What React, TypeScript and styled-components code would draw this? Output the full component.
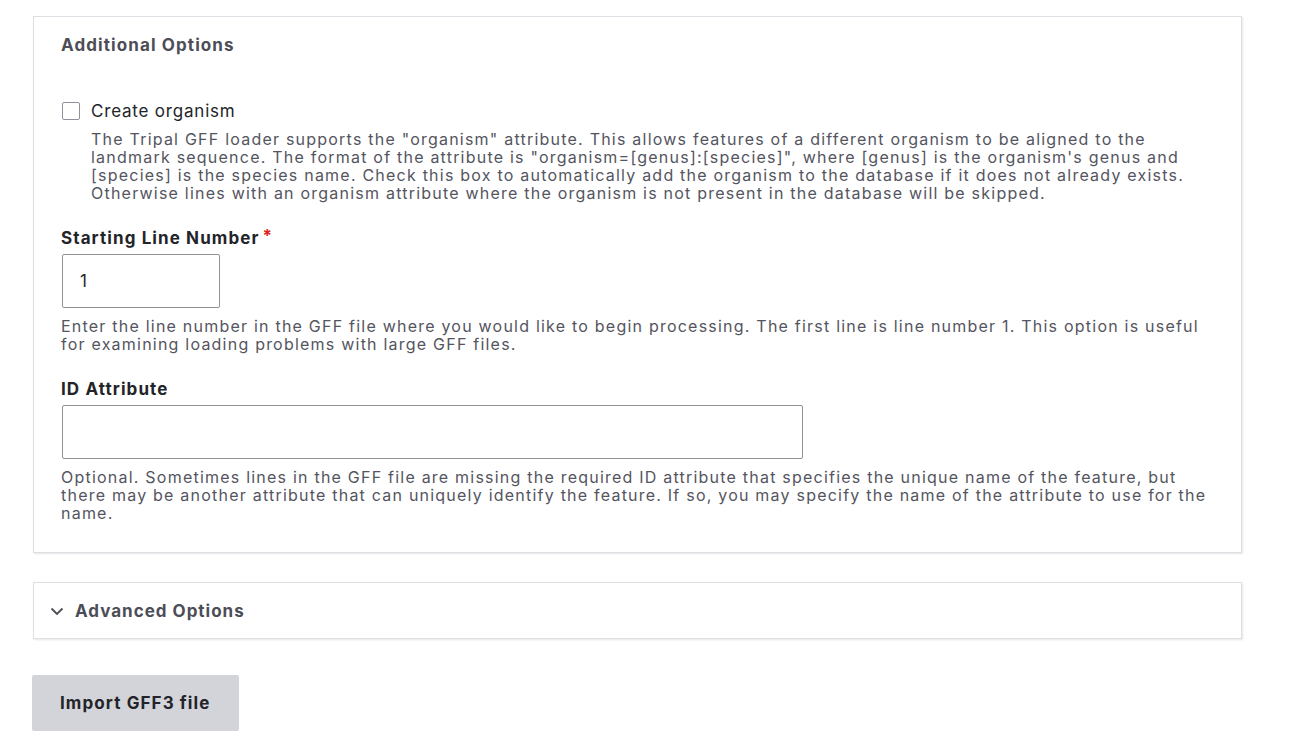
import React from "react";
import styled, { createGlobalStyle } from "styled-components";

const Global = createGlobalStyle`
  html, body { margin: 0; padding: 0; background: #ffffff; }
  body { font-family: Inter, "Noto Sans", sans-serif; color: #232429; }
`;

const Page = styled.div`
  width: 1209px;
  padding: 16px 0 0 33px;
  display: flex;
  flex-direction: column;
`;

const Card = styled.fieldset`
  margin: 0;
  border: 1px solid #dedfe4;
  box-shadow: 1px 1px 2px rgba(0, 0, 0, 0.1);
  padding: 18px 22px 30px 27px;
  display: flex;
  flex-direction: column;
  min-width: 0;
`;

const Legend = styled.div`
  font-size: 17px;
  font-weight: 700;
  color: #4c4d57;
  line-height: 20px;
  margin-bottom: 46px;
  letter-spacing: 1.1px;
`;

const CheckRow = styled.label`
  display: flex;
  align-items: center;
  gap: 11px;
  font-size: 17px;
  line-height: 20px;
  color: #232429;
  margin-left: 1px;
  letter-spacing: 0.8px;
`;

const Box = styled.span`
  width: 18px;
  height: 18px;
  box-sizing: border-box;
  border: 1px solid #8e929c;
  border-radius: 2px;
  background: #fff;
`;

const Description = styled.div<{ $indent?: boolean }>`
  font-size: 16px;
  line-height: 18px;
  color: #545560;
  margin-left: ${(p) => (p.$indent ? "30px" : "0")};
  margin-top: 9px;
  letter-spacing: 1.22px;
`;

const Field = styled.div<{ $gap?: number }>`
  display: flex;
  flex-direction: column;
  margin-top: ${(p) => p.$gap ?? 0}px;
`;

const Label = styled.div`
  font-size: 17px;
  font-weight: 700;
  line-height: 20px;
  color: #232429;
  margin-bottom: 6px;
  letter-spacing: 1.1px;
  display: flex;
  align-items: flex-start;
  gap: 3px;
`;

const Req = styled.span`
  color: #dc2323;
  font-size: 17px;
  line-height: 17px;
  letter-spacing: 0;
`;

const Input = styled.input<{ $w: number }>`
  box-sizing: border-box;
  width: ${(p) => p.$w}px;
  height: 54px;
  border: 1px solid #919297;
  border-radius: 2px;
  padding: 0 17px;
  font-family: inherit;
  font-size: 17px;
  color: #232429;
  background: #fff;
  margin: 0 0 0 1px;
  outline: none;
`;

const Details = styled.div`
  margin-top: 29px;
  border: 1px solid #dedfe4;
  box-shadow: 1px 1px 2px rgba(0, 0, 0, 0.1);
  height: 57px;
  box-sizing: border-box;
  display: flex;
  align-items: center;
  padding-left: 16px;
  gap: 11px;
  font-size: 17px;
  font-weight: 700;
  color: #4c4d57;
  letter-spacing: 1px;
`;

const Button = styled.button`
  margin-top: 36px;
  margin-left: -1px;
  align-self: flex-start;
  height: 56px;
  padding: 0 28px;
  border: none;
  border-radius: 2px;
  background: #d3d4d9;
  font-family: inherit;
  font-size: 17px;
  font-weight: 700;
  color: #232429;
  letter-spacing: 1.1px;
`;

export default function App() {
  return (
    <>
      <Global />
      <Page>
        <Card>
          <Legend>Additional Options</Legend>
          <CheckRow>
            <Box />
            Create organism
          </CheckRow>
          <Description $indent>
            The Tripal GFF loader supports the "organism" attribute. This allows features of a different organism to be aligned to the landmark sequence. The format of the attribute is "organism=[genus]:[species]", where [genus] is the organism's genus and [species] is the species name. Check this box to automatically add the organism to the database if it does not already exists. Otherwise lines with an organism attribute where the organism is not present in the database will be skipped.
          </Description>
          <Field $gap={26}>
            <Label>
              Starting Line Number<Req>*</Req>
            </Label>
            <Input $w={158} defaultValue="1" />
            <Description>
              Enter the line number in the GFF file where you would like to begin processing. The first line is line number 1. This option is useful for examining loading problems with large GFF files.
            </Description>
          </Field>
          <Field $gap={26}>
            <Label>ID Attribute</Label>
            <Input $w={741} />
            <Description>
              Optional. Sometimes lines in the GFF file are missing the required ID attribute that specifies the unique name of the feature, but there may be another attribute that can uniquely identify the feature. If so, you may specify the name of the attribute to use for the name.
            </Description>
          </Field>
        </Card>
        <Details>
          <svg width="14" height="14" viewBox="0 0 14 14" fill="none">
            <path d="M1.5 4.5L7 10L12.5 4.5" stroke="#4c4d57" strokeWidth="1.8" />
          </svg>
          Advanced Options
        </Details>
        <Button>Import GFF3 file</Button>
      </Page>
    </>
  );
}
